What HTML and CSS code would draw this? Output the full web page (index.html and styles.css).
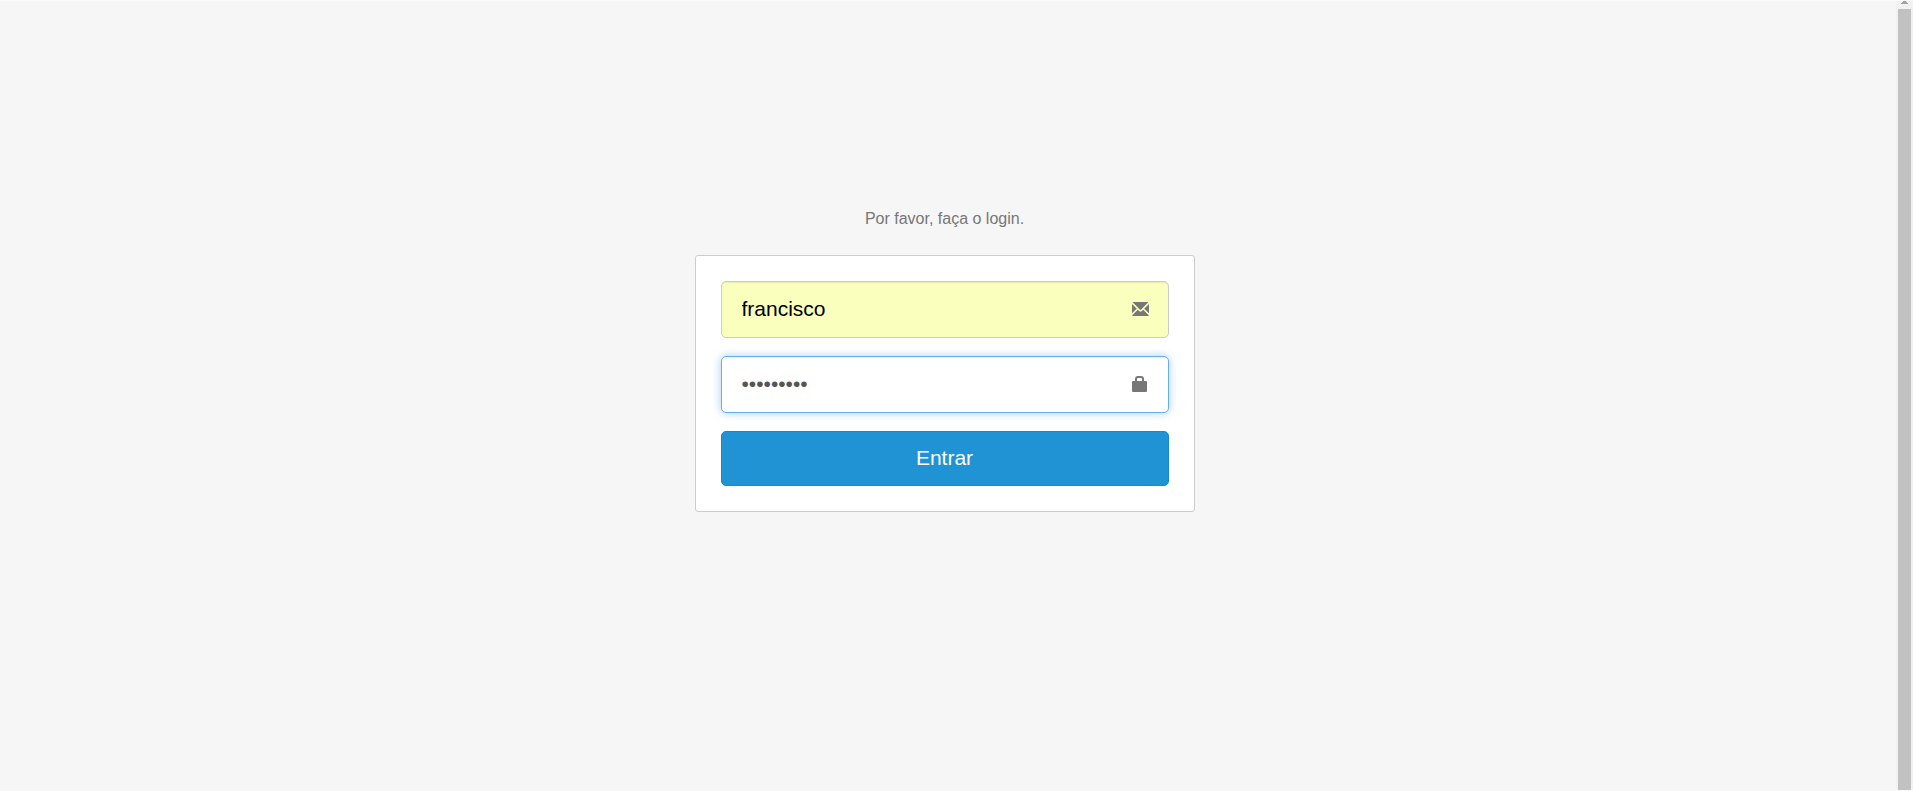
FILE: index.html
```html
<!DOCTYPE html>
<html lang="pt-BR">
<head>
<meta charset="utf-8">
<title>Login</title>
<link rel="stylesheet" href="styles.css">
</head>
<body>
<div class="page">
  <main class="content">
    <p class="message">Por favor, faça o login.</p>
    <form class="card">
      <div class="field">
        <input class="input input-filled" type="text" name="user" value="francisco" aria-label="Usuário">
        <svg class="icon" viewBox="0 0 17 16" aria-hidden="true">
          <path d="M.5 1h16L9.200 8.500q-.7.600-1.400 0zM0 3L4.800 7.800 0 12.200zM17 3L12.200 7.800 17 12.200zM5.800 8.800l1.600 1.500q1.100.900 2.200 0l1.600-1.500 5.300 5.200V15H.5v-1z"/>
        </svg>
      </div>
      <div class="field">
        <input class="input input-active" type="password" name="password" value="123456789" aria-label="Senha">
        <svg class="icon" viewBox="0 0 17 16" aria-hidden="true">
          <path fill-rule="evenodd" d="M3 5V3q0-3 3-3h3q3 0 3 3v2h2q1 0 1 1v9q0 1-1 1H1q-1 0-1-1V6q0-1 1-1zM5 5h5V3q0-1-1-1H6Q5 2 5 3z"/>
        </svg>
      </div>
      <button class="submit" type="button">Entrar</button>
    </form>
  </main>
  <div class="scrollbar" aria-hidden="true">
    <svg class="arrow" viewBox="0 0 7 3"><path d="M2 0h3v1h1v1h1v1H0V2h1V1h1z"/></svg>
    <div class="thumb"></div>
  </div>
</div>
</body>
</html>
```
FILE: styles.css
```css
* {
  box-sizing: border-box;
}

body {
  margin: 0;
  background: #f6f6f6;
  color: #777;
  font-family: "Liberation Sans", Arial, sans-serif;
  font-size: 16px;
}

.page {
  display: flex;
  min-height: 100vh;
  border-top: 1px solid #fafafa;
  border-bottom: 1px solid #fafafa;
}

.content {
  display: flex;
  flex: 1;
  flex-direction: column;
  align-items: center;
  padding: 206px 7px 0 0;
}

.message {
  margin: 0 0 24px;
  line-height: 24px;
}

.card {
  display: flex;
  flex-direction: column;
  gap: 18px;
  width: 100%;
  max-width: 500px;
  padding: 25px;
  background: #fff;
  border: 1px solid #ccc;
  border-radius: 3px;
}

.field {
  position: relative;
}

.input {
  display: block;
  width: 100%;
  height: 57px;
  padding: 12px 48px 14px 20px;
  border: 1px solid #ccc;
  border-radius: 5px;
  outline: 0;
  background: #fff;
  box-shadow: inset 0 1px 1px rgba(0, 0, 0, 0.075);
  color: #555;
  font: inherit;
  font-size: 21px;
}

.input-filled {
  background: #faffbd;
  color: #000;
}

.input-active {
  border-color: #66afe9;
  box-shadow: inset 0 1px 1px rgba(0, 0, 0, 0.075), 0 0 8px rgba(102, 175, 233, 0.6);
}

.icon {
  position: absolute;
  top: 20px;
  right: 20px;
  width: 17px;
  height: 16px;
  fill: #777;
}

.submit {
  height: 55px;
  padding: 0 0 2px;
  border: 1px solid #1b87c4;
  border-radius: 5px;
  background: #1f93d3;
  color: #fff;
  font: inherit;
  font-size: 21px;
}

.scrollbar {
  display: flex;
  flex-direction: column;
  width: 17px;
  padding: 0 2px;
  background: #f1f1f1;
}

.arrow {
  align-self: center;
  width: 7px;
  height: 3px;
  margin-bottom: 5px;
  fill: #a3a3a3;
}

.thumb {
  flex: 1;
  background: #c1c1c1;
}
```
